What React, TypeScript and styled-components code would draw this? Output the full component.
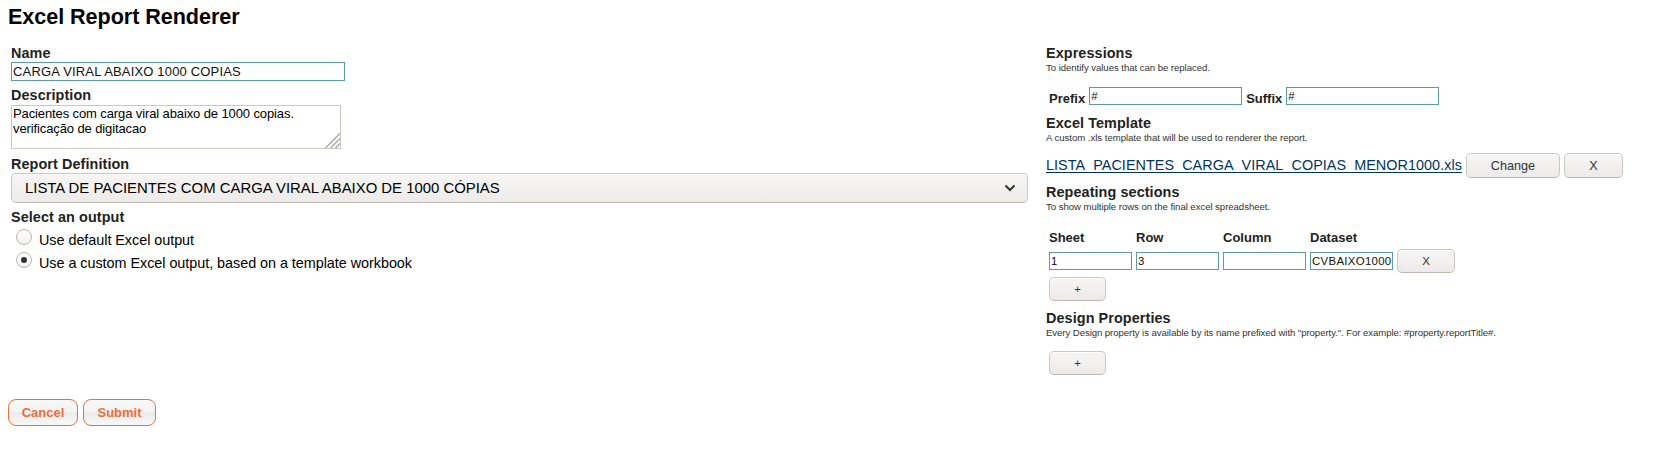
import React from "react";
import styled, { createGlobalStyle } from "styled-components";

const Global = createGlobalStyle`
  * { box-sizing: border-box; }
  body { margin: 0; background: #fff; color: #000; font-family: "Liberation Sans", Arial, sans-serif; }
`;
const Page = styled.main`
  padding: 5px 8px 0;
  height: 453px;
`;
const Title = styled.h1`
  margin: 0;
  font-size: 21.6px;
  line-height: 24px;
  letter-spacing: -0.06px;
`;
const Columns = styled.div`
  display: flex;
  height: 354px;
  margin-top: 16px;
  padding-left: 3px;
`;
const Left = styled.section`
  width: 1017px;
  margin-right: 18px;
`;
const Right = styled.section`
  flex: 1;
`;
const Heading = styled.h2<{ $top?: number }>`
  margin: ${(p) => p.$top ?? 0}px 0 0;
  font-size: 14.4px;
  line-height: 16px;
  letter-spacing: 0.09px;
  color: #222;
`;
const Hint = styled.p<{ $track?: number }>`
  margin: 0;
  font-size: 9.6px;
  line-height: 13px;
  height: 13px;
  letter-spacing: ${(p) => p.$track ?? -0.05}px;
  color: #333;
`;
const Field = styled.input<{ $w: number }>`
  display: block;
  width: ${(p) => p.$w}px;
  height: 18px;
  padding: 1px;
  border: 1px solid #5b9ea0;
  border-radius: 0;
  outline: 0;
  background: #fff;
  color: #111;
  font: 11.4px "Liberation Sans", Arial, sans-serif;
  letter-spacing: 0.32px;
`;
const NameField = styled(Field)`
  height: 19px;
  margin-top: 1px;
  font-size: 13px;
  letter-spacing: 0.17px;
`;
const AreaWrap = styled.div`
  position: relative;
  width: 330px;
  height: 44px;
  margin-top: 2px;
`;
const Area = styled.textarea`
  display: block;
  width: 100%;
  height: 100%;
  padding: 0 1px;
  border: 1px solid #cdc7c2;
  outline: 0;
  resize: none;
  overflow: hidden;
  color: #000;
  font: 13px/15px "Liberation Sans", Arial, sans-serif;
  letter-spacing: -0.11px;
`;
const Grip = styled.svg`
  position: absolute;
  right: 1px;
  bottom: 1px;
`;
const Select = styled.div`
  display: flex;
  align-items: center;
  justify-content: space-between;
  height: 30px;
  margin-top: 1px;
  padding: 0 11px 0 13px;
  border: 1px solid #cdc7c2;
  border-bottom-color: #bfb8b1;
  border-radius: 5px;
  background: linear-gradient(#f6f5f4, #edebe9);
  box-shadow: inset 0 1px #fff;
  font-size: 14.9px;
`;
const Choices = styled.div`
  margin-top: 4px;
`;
const Choice = styled.label`
  display: flex;
  height: 23px;
  padding-left: 5px;
  gap: 7px;
  font-size: 14.4px;
  line-height: 22px;
  letter-spacing: -0.04px;
`;
const Radio = styled.span`
  display: grid;
  place-items: center;
  width: 16px;
  height: 16px;
  border: 1px solid #bdb5ae;
  border-radius: 50%;
  background: linear-gradient(#fff, #f3f1ef);
`;
const Dot = styled.span`
  width: 6px;
  height: 6px;
  border-radius: 50%;
  background: #2e3436;
`;
const Row = styled.div<{ $top?: number; $left?: number; $h?: number }>`
  display: flex;
  align-items: center;
  gap: 4px;
  height: ${(p) => p.$h ?? 25}px;
  margin: ${(p) => p.$top ?? 0}px 0 0 ${(p) => p.$left ?? 3}px;
`;
const Label = styled.span<{ $w?: number; $drop?: number }>`
  width: ${(p) => (p.$w ? p.$w + "px" : "auto")};
  padding-top: ${(p) => p.$drop ?? 0}px;
  font-size: 13px;
  font-weight: bold;
  line-height: 16px;
  color: #222;
`;
const Button = styled.button<{ $w?: number; $h?: number; $size?: number }>`
  width: ${(p) => p.$w ?? 57}px;
  height: ${(p) => p.$h ?? 24}px;
  padding: 0;
  border: 1px solid #cdc7c2;
  border-bottom-color: #bfb8b1;
  border-radius: 5px;
  background: linear-gradient(#f6f5f4, #edebe9);
  box-shadow: inset 0 1px #fff;
  color: #2e3436;
  font: ${(p) => p.$size ?? 11.4}px "Liberation Sans", Arial, sans-serif;
`;
const FileLink = styled.a`
  color: #003366;
  font-size: 14.4px;
  line-height: 17px;
  letter-spacing: 0.045px;
  text-decoration: underline 1px;
  text-decoration-skip-ink: none;
  text-underline-offset: 2px;
`;
const Actions = styled.footer`
  display: flex;
  gap: 5px;
`;
const Action = styled.button<{ $w: number }>`
  width: ${(p) => p.$w}px;
  height: 27px;
  padding: 0;
  border: 1px solid #f26c36;
  border-radius: 8px;
  background: linear-gradient(#f8f8f8 0%, #f3f3f3 49%, #ebebeb 50%, #f8f8f8 100%);
  color: #f26c36;
  font: bold 13px "Liberation Sans", Arial, sans-serif;
`;

export default function App() {
  return (
    <Page>
      <Global />
      <Title>Excel Report Renderer</Title>
      <Columns>
        <Left>
          <Heading>Name</Heading>
          <NameField $w={334} defaultValue="CARGA VIRAL ABAIXO 1000 COPIAS" />
          <Heading $top={6}>Description</Heading>
          <AreaWrap>
            <Area spellCheck={false} defaultValue={"Pacientes com carga viral abaixo de 1000 copias.\nverificação de digitacao"} />
            <Grip width="15" height="15" viewBox="0 0 15 15" stroke="#aaa" strokeWidth="1.5">
              <path d="M0.5 15 15 0.5M5.5 15 15 5.5M10.5 15 15 10.5" />
            </Grip>
          </AreaWrap>
          <Heading $top={7}>Report Definition</Heading>
          <Select>
            LISTA DE PACIENTES COM CARGA VIRAL ABAIXO DE 1000 CÓPIAS
            <svg width="12" height="8" fill="none" stroke="#2e3436" strokeWidth="2"><path d="M1.5 1.5 6 6 10.5 1.5" /></svg>
          </Select>
          <Heading $top={6}>Select an output</Heading>
          <Choices>
            <Choice><Radio />Use default Excel output</Choice>
            <Choice><Radio><Dot /></Radio>Use a custom Excel output, based on a template workbook</Choice>
          </Choices>
        </Left>
        <Right>
          <Heading>Expressions</Heading>
          <Hint>To identify values that can be replaced.</Hint>
          <Row $top={13} $h={18}>
            <Label $drop={5}>Prefix</Label><Field $w={153} defaultValue="#" />
            <Label $drop={5}>Suffix</Label><Field $w={153} defaultValue="#" />
          </Row>
          <Heading $top={10}>Excel Template</Heading>
          <Hint $track={-0.03}>A custom .xls template that will be used to renderer the report.</Hint>
          <Row $top={9} $left={0}>
            <FileLink>LISTA_PACIENTES_CARGA_VIRAL_COPIAS_MENOR1000.xls</FileLink>
            <Button $w={94} $h={25} $size={12.6}>Change</Button>
            <Button $w={59} $h={25} $size={12.6}>X</Button>
          </Row>
          <Heading $top={6}>Repeating sections</Heading>
          <Hint>To show multiple rows on the final excel spreadsheet.</Hint>
          <Row $top={17} $h={16}>
            <Label $w={83}>Sheet</Label><Label $w={83}>Row</Label><Label $w={83}>Column</Label><Label>Dataset</Label>
          </Row>
          <Row $top={3} $h={24}>
            <Field $w={83} defaultValue="1" /><Field $w={83} defaultValue="3" /><Field $w={83} defaultValue="" /><Field $w={83} defaultValue="CVBAIXO1000" /><Button $w={58}>X</Button>
          </Row>
          <Row $top={4} $h={24}><Button>+</Button></Row>
          <Heading $top={9}>Design Properties</Heading>
          <Hint $track={-0.067}>Every Design property is available by its name prefixed with "property.". For example: #property.reportTitle#.</Hint>
          <Row $top={12} $h={24}><Button>+</Button></Row>
        </Right>
      </Columns>
      <Actions><Action $w={70}>Cancel</Action><Action $w={73}>Submit</Action></Actions>
    </Page>
  );
}
